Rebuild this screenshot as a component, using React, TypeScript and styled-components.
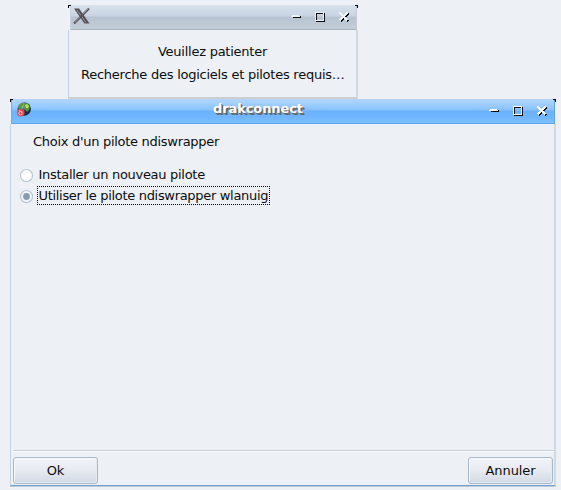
import React from "react";
import styled, { createGlobalStyle } from "styled-components";

const GlobalStyle = createGlobalStyle`
  * { box-sizing: border-box; }
  body {
    margin: 0;
    background: #edf1f6;
    color: #0c0c0c;
    font: 13px/16px "DejaVu Sans", sans-serif;
    overflow: hidden;
  }
`;

const Desktop = styled.main`
  width: 561px;
  height: 490px;
  padding-top: 5px;
  display: flex;
  flex-direction: column;
  background: #edf1f6;
`;

const Frame = styled.section<{ $main?: boolean }>`
  width: ${(p) => (p.$main ? 546 : 290)}px;
  height: ${(p) => (p.$main ? 387 : 94)}px;
  margin-left: ${(p) => (p.$main ? 10 : 68)}px;
  flex: none;
  display: flex;
  flex-direction: column;
`;

const TitleBar = styled.header<{ $main?: boolean }>`
  height: 25px;
  flex: none;
  margin: 0 1px 0 ${(p) => (p.$main ? 1 : 2)}px;
  display: grid;
  grid-template-columns: 30px 1fr 80px;
  position: relative;
  background: ${(p) =>
    p.$main
      ? "linear-gradient(#b5d5ff 0, #a5d0ff 4px, #90c6ff 9px, #85c0ff 11px, #6bb1fc 12px, #70b5ff 18px, #7cc1ff 24px)"
      : "linear-gradient(#d9e3ed 0, #d0dbe8 5px, #c9d3e2 11px, #b7c3d2 12px, #bdc8d5 18px, #c3ced8 24px)"};
  border-bottom: 1px solid ${(p) => (p.$main ? "#5aa4ee" : "#a6b5bb")};
  border-left: 1px solid ${(p) => (p.$main ? "#70aef2" : "#c6d3e0")};
  border-right: 1px solid ${(p) => (p.$main ? "#62a4e8" : "#c7cbd4")};

  &::before, &::after {
    content: "";
    position: absolute;
    top: 0;
    width: 2px;
    height: 2px;
    border-top: 1px solid #000;
  }
  &::before { left: ${(p) => (p.$main ? -2 : -3)}px; border-left: 1px solid #000; }
  &::after { right: -2px; border-right: 1px solid #000; }
`;

const Title = styled.h1`
  margin: 0;
  grid-column: 2;
  padding: 2px 0 0 0;
  text-align: center;
  color: #fff;
  font: bold 13px/16px "DejaVu Sans", sans-serif;
  letter-spacing: -0.1px;
  text-shadow: 1px 1px 0 #646a6c, 2px 2px 0 #646a6c;
`;

const BarIcon = styled.svg<{ $main?: boolean }>`
  grid-column: 1;
  width: 20px;
  height: 20px;
  margin: ${(p) => (p.$main ? "1px 0 0 3px" : "2px 0 0 1px")};
`;

const Controls = styled.svg`
  grid-column: 3;
  justify-self: end;
  width: 66px;
  height: 24px;
`;

const Body = styled.div<{ $main?: boolean }>`
  flex: 1;
  min-height: 0;
  display: flex;
  flex-direction: column;
  border: solid #c3d3e0;
  border-width: 0 2px 2px 1px;
  border-right-color: #ced9e3;
  border-bottom-color: ${(p) => (p.$main ? "#719fd2" : "#cbced5")};
  ${(p) => p.$main && "border-bottom-width: 1px; box-shadow: 0 1px 0 #bdc9d7;"}
`;

const Message = styled.div`
  padding: 10px 0 0 12px;
  line-height: 23px;
  letter-spacing: -0.245px;
`;

const MessageLine = styled.p`
  margin: 0;
  width: 263px;
  text-align: center;
  white-space: nowrap;
`;

const Content = styled.div`
  flex: 1;
  padding: 9px 8px 0;
`;

const Heading = styled.p`
  margin: 0 0 14px 14px;
  height: 18px;
  line-height: 18px;
  letter-spacing: -0.29px;
`;

const RadioRow = styled.label`
  height: 21px;
  display: flex;
  align-items: center;
`;

const Radio = styled.svg`
  width: 15px;
  height: 15px;
  flex: none;
  margin-right: 3px;
`;

const RadioText = styled.span<{ $focused?: boolean }>`
  height: 19px;
  margin-bottom: 2px;
  line-height: 17px;
  padding: 0 1px 0 0.5px;
  white-space: nowrap;
  letter-spacing: ${(p) => (p.$focused ? -0.31 : -0.29)}px;
  border: 1px dotted ${(p) => (p.$focused ? "#000" : "transparent")};
`;

const Footer = styled.footer`
  height: 35px;
  margin: 0 0 0 2px;
  border-top: 1px solid #c4ced9;
  box-shadow: inset 0 1px #fafcfe;
  display: flex;
  justify-content: space-between;
  padding: 6px 1px 0 0;
`;

const Button = styled.button`
  width: 85px;
  height: 27px;
  padding: 1px 0 0;
  border: 1px solid #a5b7c9;
  border-radius: 3px;
  background: linear-gradient(#f0f3f7, #e8ecf2 45%, #d3dae5);
  box-shadow: inset 1px 1px #f8fafc, inset -1px -1px #e5eaf0;
  color: #0c0c0c;
  font: 13px/16px "DejaVu Sans", sans-serif;
  letter-spacing: -0.1px;
`;

function WindowControls({ muted = false }: { muted?: boolean }) {
  const face = muted ? "#edf2f7" : "#fff";
  return (
    <Controls viewBox="0 0 66 24" fill="none" shapeRendering="crispEdges">
      <path d="M3 12.5h8M10 11.5h1" stroke="#050608" />
      <path d="M2 10.5h7M1 11.5h9" stroke={face} />
      <path d="M26.5 15V8.5H33M26 16.5h8.5V8" stroke="#0b0d12" />
      <rect x="25.5" y="7.5" width="8" height="8" stroke={face} />
      <path d="M50.5 8.5l8 8M58.5 8.5l-8 8" stroke="#050608" strokeWidth="2.6" />
      <path d="M49.5 7.5l8 8M57.5 7.5l-8 8" stroke={face} strokeWidth="2.6" />
    </Controls>
  );
}

function RadioButton({ checked = false }: { checked?: boolean }) {
  return (
    <Radio viewBox="0 0 15 15">
      <circle cx="7.5" cy="7.5" r="6" fill={checked ? "#f4f6f9" : "#fff"} stroke="#b9c7d7" strokeWidth="1.2" />
      {checked && <circle cx="7.5" cy="7.5" r="3.4" fill="#8798b1" />}
    </Radio>
  );
}

export default function App() {
  return (
    <>
      <GlobalStyle />
      <Desktop>
        <Frame>
          <TitleBar>
            <BarIcon viewBox="0 0 20 20">
              <path d="M2 1.5h5l10.5 15h-5z" fill="#514e54" />
              <path d="M5 3l9 12.5" stroke="#99999e" />
              <path d="M17 1.5L2 16.5" stroke="#555158" strokeWidth="2.2" />
              <path d="M16.5 1.5L11 7M8 10l-5 5.5" stroke="#928e94" />
            </BarIcon>
            <WindowControls muted />
          </TitleBar>
          <Body>
            <Message>
              <MessageLine>Veuillez patienter</MessageLine>
              <MessageLine>Recherche des logiciels et pilotes requis…</MessageLine>
            </Message>
          </Body>
        </Frame>
        <Frame $main>
          <TitleBar $main>
            <BarIcon $main viewBox="0 0 20 20">
              <defs>
                <radialGradient id="globe" cx="35%" cy="25%">
                  <stop stopColor="#c9d8ee" />
                  <stop offset=".45" stopColor="#697fac" />
                  <stop offset="1" stopColor="#182a4b" />
                </radialGradient>
              </defs>
              <circle cx="9.2" cy="9" r="6.7" fill="url(#globe)" />
              <path d="M3.5 7l2-3 2-1 1 2-2 2 1 2-2 2zM9 4l3-1 3 3-1 4-2 2-2-3-2-1z" fill="#5b9c32" />
              <path d="M10 5l2-1 2 2-1 2-2 0z" fill="#b9de61" />
              <circle cx="5.8" cy="12.7" r="3.8" fill="#df4751" />
              <circle cx="5.5" cy="13.2" r="1.7" stroke="#ffd0ce" strokeWidth=".9" fill="none" />
              <path d="M4 10.5l2 1" stroke="#ffc4c2" strokeWidth=".8" />
            </BarIcon>
            <Title>drakconnect</Title>
            <WindowControls />
          </TitleBar>
          <Body $main>
            <Content>
              <Heading>Choix d'un pilote ndiswrapper</Heading>
              <RadioRow>
                <RadioButton />
                <RadioText>Installer un nouveau pilote</RadioText>
              </RadioRow>
              <RadioRow>
                <RadioButton checked />
                <RadioText $focused>Utiliser le pilote ndiswrapper wlanuig</RadioText>
              </RadioRow>
            </Content>
            <Footer>
              <Button>Ok</Button>
              <Button>Annuler</Button>
            </Footer>
          </Body>
        </Frame>
      </Desktop>
    </>
  );
}
